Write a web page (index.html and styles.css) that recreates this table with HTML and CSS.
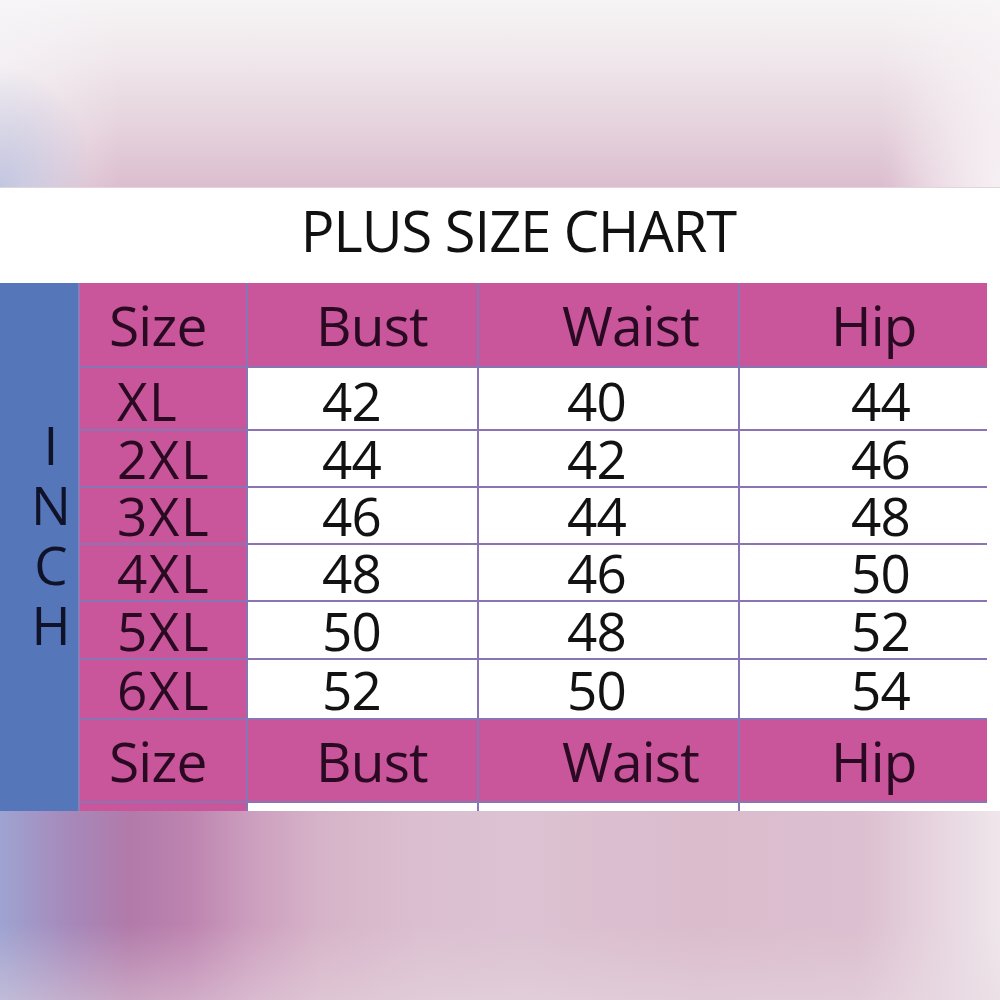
FILE: index.html
```html
<!DOCTYPE html>
<html>
<head>
<meta charset="utf-8">
<link rel="stylesheet" href="styles.css">
</head>
<body>
<div class="page">
  <div class="band band-top"></div>
  <div class="title-bar"><h1 class="title">PLUS SIZE CHART</h1></div>
  <div class="chart-wrap">
    <div class="chart">
      <div class="inch"><span>I</span><span>N</span><span>C</span><span>H</span></div>

      <div class="cell size head">Size</div>
      <div class="cell head bust-h">Bust</div>
      <div class="cell head waist-h">Waist</div>
      <div class="cell head hip-h">Hip</div>

      <div class="cell size val first">XL</div>
      <div class="cell num bust first">42</div>
      <div class="cell num waist first">40</div>
      <div class="cell num hip first">44</div>

      <div class="cell size val">2XL</div>
      <div class="cell num bust">44</div>
      <div class="cell num waist">42</div>
      <div class="cell num hip">46</div>

      <div class="cell size val">3XL</div>
      <div class="cell num bust">46</div>
      <div class="cell num waist">44</div>
      <div class="cell num hip">48</div>

      <div class="cell size val">4XL</div>
      <div class="cell num bust">48</div>
      <div class="cell num waist">46</div>
      <div class="cell num hip">50</div>

      <div class="cell size val">5XL</div>
      <div class="cell num bust">50</div>
      <div class="cell num waist">48</div>
      <div class="cell num hip">52</div>

      <div class="cell size val">6XL</div>
      <div class="cell num bust">52</div>
      <div class="cell num waist">50</div>
      <div class="cell num hip">54</div>

      <div class="cell size head">Size</div>
      <div class="cell head bust-h">Bust</div>
      <div class="cell head waist-h">Waist</div>
      <div class="cell head hip-h">Hip</div>

      <div class="cell size sliver"></div>
      <div class="cell sliver"></div>
      <div class="cell sliver"></div>
      <div class="cell sliver"></div>
    </div>
  </div>
  <div class="band band-bottom"></div>
</div>
</body>
</html>
```

FILE: styles.css
```css
html, body {
  margin: 0;
  padding: 0;
  background: #ffffff;
}

.page {
  width: 1000px;
  height: 1000px;
  overflow: hidden;
  display: flex;
  flex-direction: column;
  font-family: "Open Sans", "Noto Sans", sans-serif;
}

.band-top {
  height: 187px;
  flex: none;
  background:
    radial-gradient(ellipse 95px 120px at 0% 100%, rgba(192, 197, 224, 0.95) 0%, rgba(200, 202, 226, 0) 100%),
    radial-gradient(ellipse 110px 200px at 100% 100%, rgba(246, 240, 243, 0.9) 0%, rgba(246, 240, 243, 0) 100%),
    linear-gradient(to right, rgba(247, 246, 249, 0.6) 0%, rgba(247, 246, 249, 0) 12%, rgba(250, 247, 249, 0) 88%, rgba(250, 247, 249, 0.6) 100%),
    linear-gradient(to bottom, #f6f4f5 0%, #f0e8ec 30%, #e7d6df 62%, #dcbecf 100%);
  border-bottom: 1px solid #e2d3dc;
}

.title-bar {
  height: 95px;
  flex: none;
  background: #ffffff;
  display: flex;
  justify-content: center;
}

.title {
  margin: 0;
  padding: 14px 0 0 37px;
  font-weight: 400;
  font-size: 56px;
  line-height: 1;
  letter-spacing: -1px;
  color: #111111;
}

.chart-wrap {
  height: 528px;
  flex: none;
  background: #ffffff;
}

.chart {
  width: 987px;
  height: 528px;
  display: grid;
  grid-template-columns: 80px 168px 231px 261px 247px;
  grid-template-rows: 85px 63px 57px 57px 57px 58px 60px 83px 8px;
  box-sizing: border-box;
  border-right: 2px solid #7f76aa;
}

.inch {
  grid-column: 1;
  grid-row: 1 / -1;
  background: #5576b8;
  border-right: 2px solid #8f7cb8;
  display: flex;
  flex-direction: column;
  align-items: center;
  padding: 132px 0 0 24px;
  box-sizing: border-box;
}

.inch span {
  display: block;
  height: 60px;
  line-height: 60px;
  font-size: 53px;
  color: #10122a;
}

.cell {
  box-sizing: border-box;
  border-right: 2px solid #8a74b4;
  border-bottom: 2px solid #8a74b4;
  display: flex;
  align-items: center;
  line-height: 1;
  background: #ffffff;
  color: #121212;
  font-size: 53px;
  letter-spacing: -0.8px;
}

.cell.hip, .cell.hip-h, .cell.sliver:last-child { border-right: none; }

.head {
  background: #c9559a;
  color: #2a0a22;
  font-size: 55px;
}

.size {
  background: #c9559a;
  color: #2a0a22;
}

.size.head { padding-left: 29px; }
.size.val { padding-left: 37px; letter-spacing: 1.5px; }

.bust-h { padding-left: 68px; }
.waist-h { padding-left: 83px; }
.hip-h { padding-left: 91px; }

.num.bust { padding-left: 74px; }
.num.waist { padding-left: 88px; }
.num.hip { padding-left: 111px; }

.first { align-items: flex-end; padding-bottom: 2px; }

.sliver {
  border-bottom: none;
}

.band-bottom {
  flex: 1;
  background:
    linear-gradient(to bottom, rgba(232, 218, 226, 0) 60%, rgba(232, 218, 226, 0.45) 100%),
    linear-gradient(to right, #9ea3d1 0%, #a689ba 7%, #b17aa9 13%, #bd84b0 19%, #cc9ebe 25%, #d6b3c8 32%, #dbbfd0 42%, #dcc2d2 52%, #dabccd 70%, #dcbfd0 86%, #efe6eb 100%);
}
```
